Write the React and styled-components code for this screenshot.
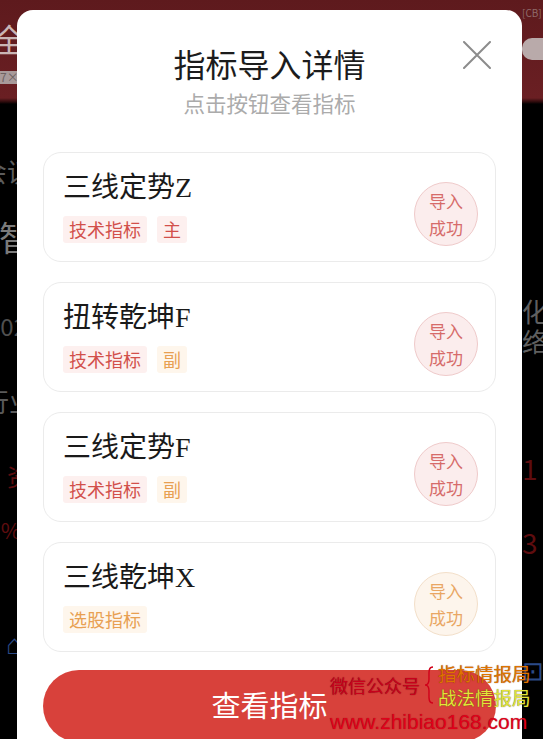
import React from 'react';
import styled, { createGlobalStyle } from 'styled-components';

const Global = createGlobalStyle`
  html, body { margin: 0; padding: 0; background: #000; }
  body { font-family: "Noto Sans CJK SC", "Noto Sans", sans-serif; }
  * { box-sizing: border-box; }
`;

const Page = styled.div`
  position: relative;
  width: 543px;
  height: 739px;
  overflow: hidden;
  background: linear-gradient(to bottom, #5e1a1d 0, #6a1f23 98px, #2a0a0b 102px, #000 104px);
  display: flex;
  justify-content: space-between;
`;

const Strip = styled.div`
  width: ${(p) => p.$w}px;
  display: flex;
  flex-direction: column;
  align-items: ${(p) => (p.$right ? 'flex-start' : 'flex-end')};
  overflow: hidden;
`;

const Frag = styled.div`
  margin-top: ${(p) => p.$mt}px;
  margin-${(p) => (p.$right ? 'left' : 'right')}: ${(p) => p.$off || 0}px;
  font-size: ${(p) => p.$size}px;
  line-height: 1;
  color: ${(p) => p.$color};
  white-space: nowrap;
  background: ${(p) => p.$bg || 'transparent'};
  border-radius: ${(p) => (p.$pill ? '10px' : '0')};
  height: ${(p) => (p.$h ? `${p.$h}px` : 'auto')};
  width: ${(p) => (p.$wd ? `${p.$wd}px` : 'auto')};
`;

const Modal = styled.div`
  position: absolute;
  top: 10px;
  left: 17px;
  width: 505px;
  height: 760px;
  background: #fff;
  border-radius: 16px;
  padding: 33px 26px 0;
  display: flex;
  flex-direction: column;
`;

const Close = styled.button`
  position: absolute;
  top: 31px;
  right: 31px;
  width: 28px;
  height: 28px;
  padding: 0;
  border: 0;
  background: none;
  display: flex;
`;

const Title = styled.h1`
  margin: 0;
  text-align: center;
  font-size: 32px;
  line-height: 40px;
  font-weight: 400;
  color: #1c1c1c;
`;

const Subtitle = styled.p`
  margin: 6px 0 0;
  text-align: center;
  font-size: 21.5px;
  line-height: 28px;
  color: #ababab;
`;

const List = styled.div`
  margin-top: 35px;
  display: flex;
  flex-direction: column;
  gap: 20px;
`;

const Card = styled.div`
  height: 110px;
  border: 1px solid #ebebeb;
  border-radius: 18px;
  padding: 0 17px 0 19px;
  display: flex;
  align-items: center;
  justify-content: space-between;
`;

const Info = styled.div`
  display: flex;
  flex-direction: column;
  gap: 11px;
`;

const Name = styled.div`
  font-family: "Liberation Serif", "Noto Sans CJK SC", serif;
  font-size: 28px;
  line-height: 34px;
  color: #1a1a1a;
`;

const Tags = styled.div`
  display: flex;
  gap: 10px;
`;

const tones = {
  red: { fg: '#d2504b', bg: '#fdf0ef', ring: '#efcaca', fill: '#fbeded', text: '#d66b69' },
  orange: { fg: '#e8a052', bg: '#fef6ec', ring: '#f3dfc9', fill: '#fdf5ec', text: '#e9a663' },
};

const Tag = styled.span`
  height: 27px;
  padding: 0 6px;
  font-size: 18px;
  line-height: 27px;
  border-radius: 3px;
  color: ${(p) => tones[p.$tone].fg};
  background: ${(p) => tones[p.$tone].bg};
`;

const Badge = styled.div`
  width: 64px;
  height: 64px;
  margin-top: 13px;
  border-radius: 50%;
  border: 1px solid ${(p) => tones[p.$tone].ring};
  background: ${(p) => tones[p.$tone].fill};
  color: ${(p) => tones[p.$tone].text};
  font-size: 17px;
  line-height: 27px;
  display: flex;
  flex-direction: column;
  align-items: center;
  justify-content: center;
`;

const Primary = styled.button`
  margin-top: 18px;
  height: 72px;
  border: 0;
  border-radius: 36px;
  background: #d8413b;
  color: #fff;
  font-family: "Noto Sans CJK SC", sans-serif;
  font-size: 29px;
  display: flex;
  align-items: center;
  justify-content: center;
  padding: 0 0 4px;
`;

const Watermark = styled.div`
  position: absolute;
  left: 330px;
  top: 661px;
  display: flex;
  flex-direction: column;
  font-family: "Noto Sans CJK SC", sans-serif;
  pointer-events: none;
`;

const WmRow = styled.div`
  display: flex;
  align-items: center;
`;

const WmText = styled.span`
  font-size: ${(p) => p.$size || 18}px;
  line-height: 24px;
  font-weight: 400;
  color: ${(p) => p.$color};
  text-shadow: 0 0 1px ${(p) => p.$shadow || 'rgba(0,0,0,0.5)'};
  white-space: nowrap;
`;

const WmStack = styled.div`
  display: flex;
  flex-direction: column;
  margin-left: 1px;
`;

const WmUrl = styled.span`
  margin-top: 1px;
  font-family: "Liberation Sans", sans-serif;
  font-size: 21px;
  line-height: 24px;
  color: #e0001a;
  text-shadow: 0 0 1px rgba(80,0,0,0.6);
  white-space: nowrap;
`;

const items = [
  { name: '三线定势Z', tags: [['技术指标', 'red'], ['主', 'red']], tone: 'red' },
  { name: '扭转乾坤F', tags: [['技术指标', 'red'], ['副', 'orange']], tone: 'red' },
  { name: '三线定势F', tags: [['技术指标', 'red'], ['副', 'orange']], tone: 'red' },
  { name: '三线乾坤X', tags: [['选股指标', 'orange']], tone: 'orange' },
];

export default function App() {
  return (
    <>
      <Global />
      <Page>
        <Strip $w={17}>
          <Frag $mt={22} $size={32} $color="#c9b5b5" $off={-8}>全</Frag>
          <Frag $mt={17} $size={12} $color="#6e6262" $bg="#a89a9a" $h={13} $wd={17} $off={0}>7×</Frag>
          <Frag $mt={74} $size={26} $color="#5c5c5c" $off={-16}>会议</Frag>
          <Frag $mt={36} $size={34} $color="#7a7a7a" $off={-16}>智</Frag>
          <Frag $mt={60} $size={24} $color="#4f4f4f" $off={-10}>02</Frag>
          <Frag $mt={50} $size={26} $color="#5a5a5a" $off={-18}>行业</Frag>
          <Frag $mt={50} $size={24} $color="#5e0d0f" $off={-14}>资</Frag>
          <Frag $mt={30} $size={22} $color="#5e0d0f" $off={-4}>%</Frag>
          <Frag $mt={88} $size={28} $color="#2b4a86" $off={-6}>⌂</Frag>
        </Strip>
        <Strip $w={21} $right>
          <Frag $mt={8} $size={10} $color="#8f6a6a" $off={3}>[CB]</Frag>
          <Frag $mt={20} $size={10} $color="transparent" $bg="#b9aaaa" $pill $h={22} $wd={30} $off={4}> </Frag>
          <Frag $mt={238} $size={26} $color="#5f5f5f" $off={4}>化</Frag>
          <Frag $mt={4} $size={26} $color="#5f5f5f" $off={4}>络</Frag>
          <Frag $mt={100} $size={28} $color="#5e0d0f" $off={8}>1</Frag>
          <Frag $mt={46} $size={28} $color="#5e0d0f" $off={8}>3</Frag>
          <Frag $mt={100} $size={26} $color="#2b4a86" $off={6}>⊡</Frag>
        </Strip>

        <Modal>
          <Close aria-label="关闭">
            <svg width="28" height="28" viewBox="0 0 28 28">
              <path d="M1 1 L27 27 M27 1 L1 27" stroke="#8c8c8c" strokeWidth="2" strokeLinecap="round" />
            </svg>
          </Close>
          <Title>指标导入详情</Title>
          <Subtitle>点击按钮查看指标</Subtitle>
          <List>
            {items.map((it) => (
              <Card key={it.name}>
                <Info>
                  <Name>{it.name}</Name>
                  <Tags>
                    {it.tags.map(([t, tone]) => (
                      <Tag key={t} $tone={tone}>{t}</Tag>
                    ))}
                  </Tags>
                </Info>
                <Badge $tone={it.tone}>
                  <span>导入</span>
                  <span>成功</span>
                </Badge>
              </Card>
            ))}
          </List>
          <Primary>查看指标</Primary>
        </Modal>

        <Watermark>
          <WmRow>
            <WmText $color="#c8001c" $shadow="rgba(60,0,0,0.7)">微信公众号</WmText>
            <svg width="14" height="40" viewBox="0 0 14 40" style={{ margin: '0 1px 0 2px' }}>
              <path d="M11 2 C6 2 7 8 7 14 C7 18 6 20 3 20 C6 20 7 22 7 26 C7 32 6 38 11 38" fill="none" stroke="#d0001a" strokeWidth="1.4" />
            </svg>
            <WmStack>
              <WmText $size={18.5} $color="#e07400" $shadow="rgba(90,30,0,0.8)">指标情报局</WmText>
              <WmText $size={18.5} $color="#e4e43a" $shadow="rgba(60,60,0,0.9)">战法情报局</WmText>
            </WmStack>
          </WmRow>
          <WmUrl>www.zhibiao168.com</WmUrl>
        </Watermark>
      </Page>
    </>
  );
}
